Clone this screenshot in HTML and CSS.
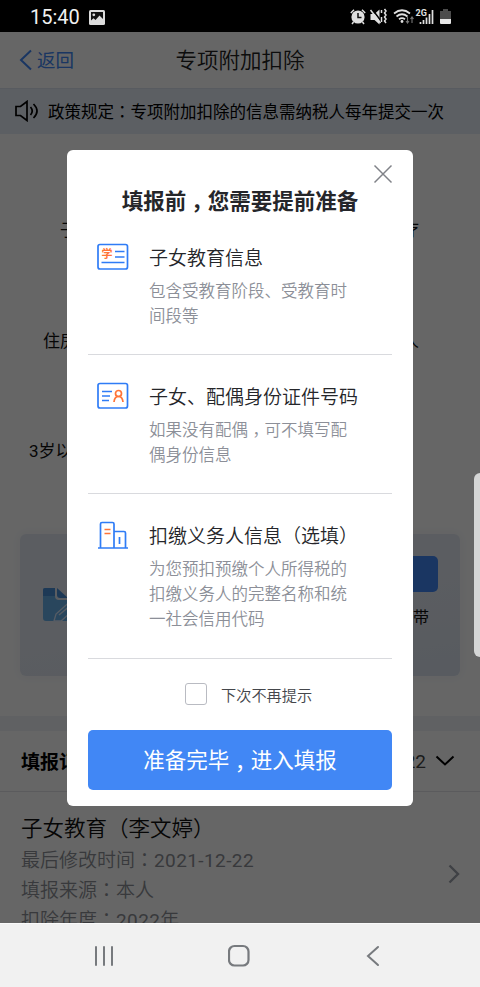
FILE: index.html
```html
<!DOCTYPE html>
<html lang="zh-CN">
<head>
<meta charset="utf-8">
<title>专项附加扣除</title>
<link rel="stylesheet" href="styles.css">
</head>
<body>
<div class="phone">
  <div class="status">
    <span class="clock">15:40</span>
    <svg class="pic" width="16" height="15" viewBox="0 0 16 15"><rect width="16" height="15" rx="1.500" fill="#dcdcdc"/><path d="M2 10.500V2h12v7l-3.500-3.500L6.500 10 4.500 8.200z" fill="#111"/><circle cx="4.800" cy="4.800" r="1.400" fill="#dcdcdc"/></svg>
    <svg class="signals" width="104" height="18" viewBox="0 0 104 18">
      <g fill="none" stroke="#e0e0e0" stroke-width="1.500">
        <circle cx="8" cy="9" r="6.600" fill="#e0e0e0" stroke="none"/>
        <path d="M.8 5 4 1.800M12 1.800 15.200 5M3.500 14 2 16M12.500 14 14 16"/>
        <path d="M8 5v4.500h3.500" stroke="#111"/>
        <path d="M20.500 6h4l5-4.500v15l-5-4.500h-4z" fill="#e0e0e0" stroke="none"/>
        <path d="M22 1 31 13" stroke="#000" stroke-width="1.500"/><path d="M20.500 2 30.500 15" />
        <path d="M31.500 2v3M31.500 9v5M34.500 1l1.500 2-1.500 2 1.500 2-1.500 2 1.500 2-1.500 2 1.500 2"/>
        <path d="M44 5.500q8-6.500 16 0M46.500 8.500q5.500-4.500 11 0M49 11.300q3-2.200 6 0" stroke-width="1.700"/>
        <circle cx="52" cy="13.500" r="1.400" fill="#e0e0e0" stroke="none"/>
        <path d="M57.500 9v6m-1.500-2 1.500 2 1.500-2M62 15V9m-1.500 2L62 9l1.500 2" stroke="#777" stroke-width="1.100"/>
        <path d="M70.500 16v-2M73.500 16v-4M76.500 16V9.500M79.500 16V6M82.500 16V2" stroke-width="1.700"/>
      </g>
      <text x="65.500" y="7.500" class="gen">2G</text>
      <path d="M90 3h3V1h5v2h3v8H90z" fill="#4c4c4c"/><path d="M90 11h11v4q0 1-1 1h-9q-1 0-1-1z" fill="#e6e6e6"/>
    </svg>
  </div>

  <div class="screen">
    <div class="navbar">
      <div class="back">
        <svg width="14" height="22" viewBox="0 0 14 22"><path d="M12 1.500 2 11l10 9.500" fill="none" stroke="#4187f5" stroke-width="2"/></svg>
        <span>返回</span>
      </div>
      <div class="page-title">专项附加扣除</div>
    </div>
    <div class="notice">
      <svg width="25" height="22" viewBox="0 0 25 22"><g fill="none" stroke="#000" stroke-width="1.700"><path d="M2 6.500h4.500L13 1.500v19L6.500 15.500H2zM16.500 7q3.500 4 0 8M19.500 4q7 7 0 14"/></g></svg>
      <span>政策规定<span class="tc" lang="zh-Hant">：</span>专项附加扣除的信息需纳税人每年提交一次</span>
    </div>
    <div class="menu">
      <div class="menu-row first"><span>子</span><span>疗</span></div>
      <div class="menu-row second"><span>住房</span><span>人</span></div>
      <div class="menu-row third"><span>3岁以</span></div>
    </div>
    <div class="banner">
      <svg width="36" height="34" viewBox="0 0 36 34"><path d="M2 0h10v8q0 4 4 4h20v21H3q-3 0-3-3V2q0-2 2-2z" fill="#67afe8"/><path d="M2 0h10v8H0V2q0-2 2-2z" fill="#4a8ed8"/><path d="M14 0v7q0 3 3 3h8z" fill="#4a8ed8"/><path d="M11 33l2-7L30 11l6 6-18 16z" fill="#67afe8" stroke="#d8e6fa" stroke-width="1.300"/><path d="m16 27 12-10" stroke="#d8e6fa" stroke-width="1.500"/></svg>
      <div class="banner-side"><div class="banner-btn"></div><div class="banner-tip">带</div></div>
    </div>
    <div class="records">
      <div class="records-head">
        <strong>填报记</strong>
        <span class="year">22</span>
        <svg width="20" height="12" viewBox="0 0 20 12"><path d="m1.500 1.500 8.500 8 8.500-8" fill="none" stroke="#000" stroke-width="2"/></svg>
      </div>
      <div class="record">
        <div class="record-info">
          <div class="record-name">子女教育（李文婷）</div>
          <div>最后修改时间<span class="tc" lang="zh-Hant">：</span><span class="date">2021-12-22</span></div>
          <div>填报来源<span class="tc" lang="zh-Hant">：</span>本人</div>
          <div>扣除年度<span class="tc" lang="zh-Hant">：</span><span class="date">2022</span>年</div>
        </div>
        <svg width="12" height="20" viewBox="0 0 12 20"><path d="m1.500 1.500 8.500 8.500-8.500 8.500" fill="none" stroke="#9ea2ac" stroke-width="2.400"/></svg>
      </div>
    </div>

    <div class="overlay">
      <div class="dialog">
        <svg class="close" width="20" height="20" viewBox="0 0 20 20"><path d="m1.500 1.500 17 17M18.500 1.500l-17 17" stroke="#808288" stroke-width="1.500"/></svg>
        <h1>填报前<span class="tc comma" lang="zh-Hant">，</span>您需要提前准备</h1>
        <div class="item">
          <svg width="32" height="28" viewBox="0 0 32 28"><rect x="1" y="1.500" width="29.500" height="24.500" rx="2" fill="none" stroke="#2f7cf6" stroke-width="1.700"/><path d="M18 8.500h9.500M18 14h9.500M4.500 19.500h23" stroke="#2f7cf6" stroke-width="1.500"/><text x="4.500" y="14.500" class="study">学</text></svg>
          <div><h2>子女教育信息</h2><p>包含受教育阶段、受教育时间段等</p></div>
        </div>
        <div class="item">
          <svg width="32" height="28" viewBox="0 0 32 28"><rect x="1" y="1.500" width="29.500" height="24.500" rx="2" fill="none" stroke="#2f7cf6" stroke-width="1.700"/><path d="M5 9.500h10M5 14h8M5 18.500h7" stroke="#2f7cf6" stroke-width="1.500"/><g fill="none" stroke="#ff7438" stroke-width="1.700"><circle cx="21.500" cy="11.500" r="3"/><path d="M17 20q.5-5.500 4.500-5.500t4.500 5.500"/></g></svg>
          <div><h2>子女、配偶身份证件号码</h2><p>如果没有配偶<span class="tc comma" lang="zh-Hant">，</span>可不填写配偶身份信息</p></div>
        </div>
        <div class="item last">
          <svg width="32" height="28" viewBox="0 0 32 28"><path d="M3.500 27V3q0-1.500 1.500-1.500h10.500Q17 1.500 17 3v24m0-16.500h10q1.500 0 1.500 1.500v15M1 27h30M22.500 16v7" fill="none" stroke="#2f7cf6" stroke-width="1.700"/><path d="M7.500 8.500h6M7.500 12.500h6" stroke="#ff7438" stroke-width="1.600"/></svg>
          <div><h2>扣缴义务人信息（选填）</h2><p>为您预扣预缴个人所得税的扣缴义务人的完整名称和统一社会信用代码</p></div>
        </div>
        <label class="skip"><span class="box"></span>下次不再提示</label>
        <button>准备完毕<span class="tc comma" lang="zh-Hant">，</span>进入填报</button>
      </div>
    </div>
    <div class="edge"></div>
  </div>

  <div class="system-nav">
    <svg width="20" height="22" viewBox="0 0 20 22"><path d="M2 2v18M10 2v18M18 2v18" stroke="#777a7e" stroke-width="2" stroke-linecap="round"/></svg>
    <svg width="24" height="24" viewBox="0 0 24 24"><rect x="1" y="2" width="19.500" height="19.500" rx="5.500" fill="none" stroke="#777a7e" stroke-width="2.200"/></svg>
    <svg width="14" height="22" viewBox="0 0 14 22"><path d="M12 2 2 11l10 9" fill="none" stroke="#777a7e" stroke-width="2" stroke-linecap="round"/></svg>
  </div>
</div>
</body>
</html>
```

FILE: styles.css
```css
* { box-sizing: border-box; }
body { margin: 0; font-family: Roboto, "Noto Sans CJK SC", sans-serif; font-weight: 350; }
h1, h2, p { margin: 0; }
svg { display: block; flex: none; }
.tc { font-family: "Noto Sans CJK TC", sans-serif; line-height: 0; }
.comma { position: relative; top: .36em; }

.phone { width: 480px; height: 987px; overflow: hidden; display: flex; flex-direction: column; }

.status { height: 32px; flex: none; background: #000; display: flex; align-items: center; padding: 2px 26px 0 30px; }
.clock { color: #f0f0f0; font-size: 20px; font-weight: 400; line-height: 28px; width: 59px; }
.signals { margin-left: auto; }
.gen { font: bold 9px Roboto, sans-serif; fill: #e0e0e0; }

.screen { position: relative; height: 891px; flex: none; overflow: hidden; background: #fff; }
.navbar { height: 56px; display: grid; grid-template-columns: 1fr auto 1fr; align-items: center; padding: 0 19px; }
.back { display: flex; align-items: center; gap: 4px; color: #4187f5; font-size: 18.500px; font-weight: 400; line-height: 26px; }
.back span { padding-top: 1px; }
.page-title { font-size: 21.500px; color: #222; padding-bottom: 3px; }
.notice { height: 46px; background: #e6edf8; border-top: 1px solid #dce4ef; display: flex; align-items: center; gap: 9px; padding: 0 0 2px 14px; font-size: 16.500px; font-weight: 400; color: #000; white-space: nowrap; }

.menu { height: 400px; font-size: 17px; font-weight: 400; line-height: 24px; color: #111; }
.menu-row { display: flex; justify-content: space-between; }
.first { padding: 84px 61px 0 60px; }
.second { padding: 87px 61px 0 43px; }
.third { padding: 86px 0 0 29px; }

.banner { height: 142px; margin: 0 20px 40px; border-radius: 6px; background: linear-gradient(170deg, #e4e9f2, #e4e9f2 50%, #dbe3f0); box-shadow: 0 0 12px 2px #f5f7fa; display: flex; justify-content: space-between; padding: 22px 22px 0 23px; }
.banner svg { margin-top: 32px; }
.banner-btn { width: 90px; height: 36px; border-radius: 5px; background: #4187f5; }
.banner-tip { margin: 14px 9px 0 0; text-align: right; font-size: 16px; font-weight: 400; line-height: 24px; color: #111; }

.records { border-top: 15px solid #f1f2f8; font-size: 19px; color: #8c8f96; }
.records-head { height: 61px; border-bottom: 1px solid #e4e4e8; display: flex; align-items: center; padding: 0 25px 0 21px; }
.records-head strong { color: #000; font-weight: 700; padding-bottom: 2px; }
.year { margin-left: auto; margin-right: 9px; color: #444; font-weight: 400; }
.record { display: flex; align-items: flex-start; justify-content: space-between; padding: 21px 20px 0 21px; line-height: 30px; }
.record svg { margin-top: 51px; }
.record-name { font-size: 21.500px; color: #111; line-height: 32px; margin-bottom: 1px; }
.date { letter-spacing: .4px; font-weight: 400; }

.overlay { position: absolute; inset: 0; background: rgba(0, 0, 0, .6); display: flex; align-items: center; justify-content: center; }
.dialog { position: relative; width: 346px; height: 656px; background: #fff; border-radius: 6px; padding: 36px 21px 16px; }
.close { position: absolute; top: 14px; right: 20px; }
.dialog h1 { font-size: 21.500px; line-height: 30px; padding-top: 1px; height: 30px; font-weight: 700; text-align: center; color: #25262a; white-space: nowrap; }
.item { display: flex; gap: 20px; padding: 29px 0 0 9px; height: 139px; border-bottom: 1px solid #d9dade; }
.last { height: 165px; }
.item > div { width: 214px; }
.item > svg { margin-top: -2px; }
.item h2 { font-size: 19px; line-height: 28px; font-weight: 350; color: #25262a; white-space: nowrap; margin-bottom: 6px; }
.item p { font-size: 16.500px; line-height: 25.250px; color: #8c8f98; width: 199px; }
.study { font: bold 11px "Noto Sans CJK SC", sans-serif; fill: #ff7438; }
.skip { height: 71px; display: flex; align-items: center; padding: 0 0 1px 97px; gap: 14px; font-size: 15.200px; color: #44464b; }
.box { width: 22px; height: 22px; border: 1.500px solid #b9bbc2; border-radius: 3px; }
.dialog button { display: block; width: 100%; height: 60px; border: 0; border-radius: 5px; padding: 0 0 2px; background: #4187f5; color: #fff; font: 400 21.500px Roboto, "Noto Sans CJK SC", sans-serif; }

.edge { position: absolute; right: 0; top: 441px; width: 6px; height: 184px; border-radius: 6px 0 0 6px; background: #d5d6d6; }
.system-nav { height: 64px; flex: none; background: #f1f1f1; border-top: 1px solid #fafafa; display: flex; align-items: center; justify-content: space-between; padding: 0 100px 0 94px; }
```
